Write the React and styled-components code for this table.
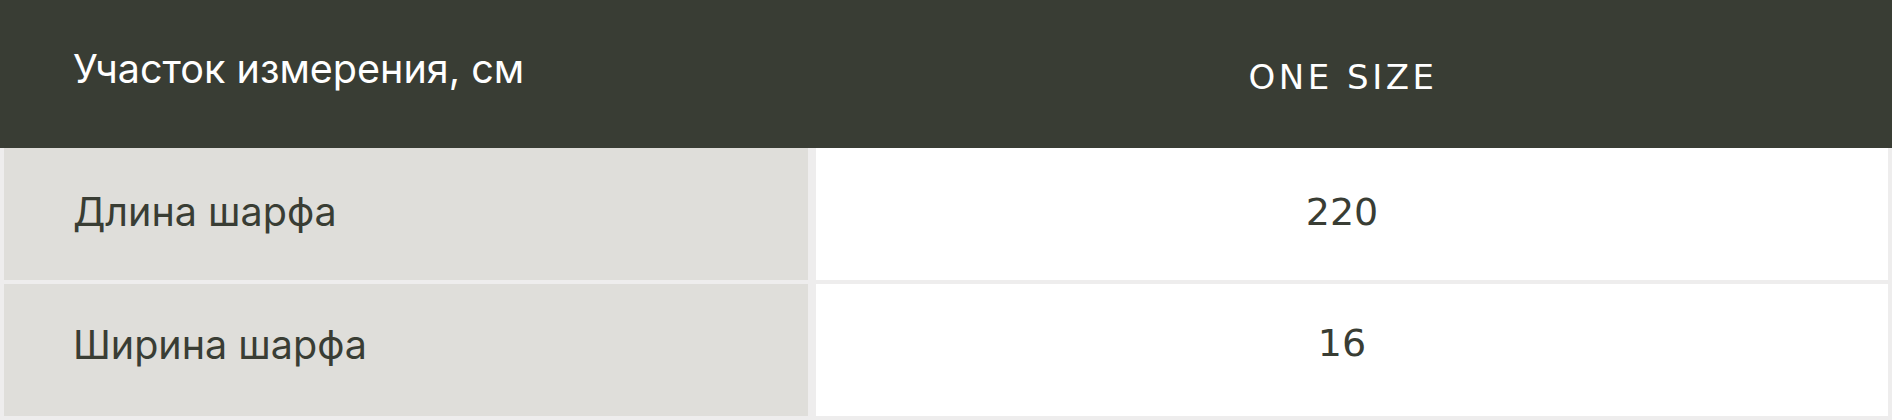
import React from "react";
import styled, { createGlobalStyle } from "styled-components";

const Global = createGlobalStyle`
  html, body { margin: 0; padding: 0; background: #ffffff; }
  body { font-family: Inter, Roboto, "Liberation Sans", sans-serif; }
`;

const Table = styled.div`
  width: 1892px;
  display: flex;
  flex-direction: column;
`;

const HeaderRow = styled.div`
  display: grid;
  grid-template-columns: 812px 1fr;
  height: 148px;
  background: #393d34;
  color: #ffffff;
`;

const HeaderLabel = styled.div`
  display: flex;
  align-items: center;
  padding-left: 73px;
  padding-bottom: 10px;
  font-family: Inter, Roboto, "Liberation Sans", sans-serif;
  font-size: 39.5px;
  font-weight: 400;
`;

const HeaderValue = styled.div`
  display: flex;
  align-items: center;
  justify-content: center;
  padding-right: 18px;
  padding-top: 6px;
  font-family: "DejaVu Sans", sans-serif;
  font-size: 34px;
  font-weight: 400;
  letter-spacing: 3.5px;
`;

const Body = styled.div`
  display: grid;
  grid-template-columns: 804px 1fr;
  column-gap: 8px;
  row-gap: 4px;
  padding: 0 4px 4px 4px;
  background: #eeeded;
`;

const LabelCell = styled.div`
  height: 132px;
  display: flex;
  align-items: center;
  padding-left: 69px;
  padding-bottom: ${(p) => (p.$first ? "4px" : "10px")};
  box-sizing: border-box;
  background: #dfdeda;
  color: #393d34;
  font-family: Inter, Roboto, "Liberation Sans", sans-serif;
  font-size: 39.5px;
`;

const ValueCell = styled.div`
  height: 132px;
  display: flex;
  align-items: center;
  justify-content: center;
  padding-right: 20px;
  padding-bottom: ${(p) => (p.$first ? "4px" : "14px")};
  box-sizing: border-box;
  background: #ffffff;
  color: #393d34;
  font-family: "DejaVu Sans", sans-serif;
  font-size: 38px;
`;

const rows = [
  { label: "Длина шарфа", value: "220" },
  { label: "Ширина шарфа", value: "16" },
];

export default function App() {
  return (
    <>
      <Global />
      <Table>
        <HeaderRow>
          <HeaderLabel>Участок измерения, см</HeaderLabel>
          <HeaderValue>ONE SIZE</HeaderValue>
        </HeaderRow>
        <Body>
          {rows.map((r, i) => (
            <React.Fragment key={r.label}>
              <LabelCell $first={i === 0}>{r.label}</LabelCell>
              <ValueCell $first={i === 0}>{r.value}</ValueCell>
            </React.Fragment>
          ))}
        </Body>
      </Table>
    </>
  );
}
